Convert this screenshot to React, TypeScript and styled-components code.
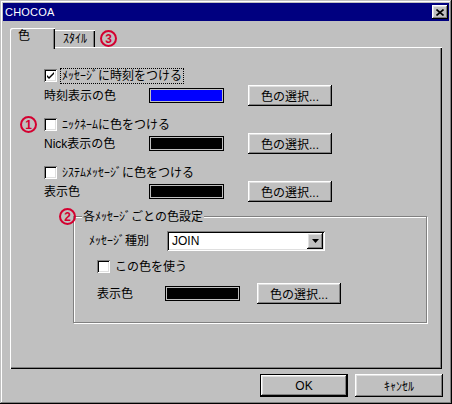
import styled, { createGlobalStyle } from "styled-components";

const GlobalStyle = createGlobalStyle`
  body {
    margin: 0;
    background: #c0c0c0;
    font-family: "Liberation Sans", "Noto Sans CJK JP", sans-serif;
    font-size: 12px;
    color: #000;
  }
`;

const RED = "#d40030";

export default function App() {
  return (
    <>
      <GlobalStyle />
      <Window>
        <TitleBar>
          <Title>CHOCOA</Title>
          <CloseBtn>
            <svg width="8" height="7" viewBox="0 0 8 7">
              <path d="M0.5 0.5 L7.5 6.5 M7.5 0.5 L0.5 6.5" stroke="#000" strokeWidth="1.6" />
            </svg>
          </CloseBtn>
        </TitleBar>
        <Body>
          <TabRow>
            <Tab $active>色</Tab>
            <Tab>ｽﾀｲﾙ</Tab>
            <Badge $ml={5}>3</Badge>
          </TabRow>
          <Panel>
            <Row $h={17} $indent={34}>
              <CheckBox $checked />
              <CheckLabel $focus>ﾒｯｾｰｼﾞに時刻をつける</CheckLabel>
            </Row>
            <Row $h={21} $indent={34} $mt={1}>
              <Label $w={105}>時刻表示の色</Label>
              <Swatch $color="#0000ff" />
              <Button $ml={24}>色の選択...</Button>
            </Row>

            <Row $h={17} $indent={10} $mt={10}>
              <Badge $mr={7}>1</Badge>
              <CheckBox />
              <CheckLabel>ﾆｯｸﾈｰﾑに色をつける</CheckLabel>
            </Row>
            <Row $h={21} $indent={34}>
              <Label $w={105}>Nick表示の色</Label>
              <Swatch $color="#000" />
              <Button $ml={24}>色の選択...</Button>
            </Row>

            <Row $h={17} $indent={34} $mt={10}>
              <CheckBox />
              <CheckLabel>ｼｽﾃﾑﾒｯｾｰｼﾞに色をつける</CheckLabel>
            </Row>
            <Row $h={21} $indent={34}>
              <Label $w={105}>表示色</Label>
              <Swatch $color="#000" />
              <Button $ml={24}>色の選択...</Button>
            </Row>

            <Group>
              <Legend>
                <Badge>2</Badge>
                <LegendText>各ﾒｯｾｰｼﾞごとの色設定</LegendText>
              </Legend>
              <Row $h={20} $indent={15} $mt={6}>
                <Label $w={78}>ﾒｯｾｰｼﾞ種別</Label>
                <Combo>
                  <ComboText>JOIN</ComboText>
                  <DropBtn>
                    <svg width="7" height="4" viewBox="0 0 7 4">
                      <path d="M0 0 H7 L3.5 4 Z" fill="#000" />
                    </svg>
                  </DropBtn>
                </Combo>
              </Row>
              <Row $h={17} $indent={23} $mt={7}>
                <CheckBox />
                <CheckLabel>この色を使う</CheckLabel>
              </Row>
              <Row $h={21} $indent={23} $mt={8}>
                <Label $w={68}>表示色</Label>
                <Swatch $color="#000" />
                <Button $ml={17}>色の選択...</Button>
              </Row>
            </Group>
          </Panel>
          <Footer>
            <Button $w={88} $h={23} $default>OK</Button>
            <Button $w={88} $h={23}>ｷｬﾝｾﾙ</Button>
          </Footer>
        </Body>
      </Window>
    </>
  );
}

function CheckBox({ $checked }: { $checked?: boolean }) {
  return (
    <Box>
      {$checked && (
        <svg width="7" height="7" viewBox="0 0 7 7">
          <path d="M0 2 L2 4 L7 -1 L7 1 L2 6 L0 4 Z" fill="#000" transform="translate(0 1)" />
        </svg>
      )}
    </Box>
  );
}

const raised = `
  box-shadow: inset -1px -1px #000, inset 1px 1px #fff, inset -2px -2px #808080,
    inset 2px 2px #dfdfdf;
`;

const sunken = `
  box-shadow: inset 1px 1px #808080, inset -1px -1px #fff, inset 2px 2px #000,
    inset -2px -2px #dfdfdf;
`;

const Window = styled.div`
  width: 452px;
  height: 404px;
  box-sizing: border-box;
  padding: 3px;
  background: #c0c0c0;
  box-shadow: inset -1px -1px #000, inset 1px 1px #c0c0c0, inset -2px -2px #808080,
    inset 2px 2px #fff;
  display: flex;
  flex-direction: column;
`;

const TitleBar = styled.div`
  height: 18px;
  background: #000080;
  display: flex;
  align-items: center;
  justify-content: space-between;
  padding: 0 1px 0 2px;
`;

const Title = styled.span`
  color: #fff;
  font-size: 11px;
  line-height: 18px;
  letter-spacing: 0.2px;
`;

const CloseBtn = styled.div`
  width: 16px;
  height: 14px;
  background: #c0c0c0;
  display: grid;
  place-items: center;
  ${raised}
`;

const Body = styled.div`
  display: flex;
  flex-direction: column;
  padding: 7px 0 0 7px;
`;

const TabRow = styled.div`
  display: flex;
  align-items: flex-end;
  height: 19px;
`;

const Tab = styled.div<{ $active?: boolean }>`
  box-sizing: border-box;
  background: #c0c0c0;
  line-height: 16px;
  display: flex;
  ${({ $active }) =>
    $active
      ? `
    width: 45px;
    height: 21px;
    margin-bottom: -2px;
    padding-left: 8px;
    position: relative;
    z-index: 1;
    border-top-left-radius: 2px;
    box-shadow: inset 1px 1px #fff, inset -1px 0 #000, inset -2px 0 #808080;
  `
      : `
    width: 40px;
    height: 17px;
    padding-top: 1px;
    justify-content: center;
    box-shadow: inset 0 1px #fff, inset -1px 0 #000, inset -2px 0 #808080;
  `}
`;

const Badge = styled.span<{ $ml?: number; $mr?: number }>`
  width: 17px;
  height: 17px;
  flex: none;
  box-sizing: border-box;
  border: 2px solid ${RED};
  border-radius: 50%;
  color: ${RED};
  font-size: 12px;
  font-weight: bold;
  line-height: 1;
  display: grid;
  place-items: center;
  margin-left: ${({ $ml }) => $ml ?? 0}px;
  margin-right: ${({ $mr }) => $mr ?? 0}px;
`;

const Panel = styled.div`
  width: 432px;
  height: 322px;
  box-sizing: border-box;
  padding-top: 20px;
  box-shadow: inset 1px 1px #fff, inset -1px -1px #000, inset -2px -2px #808080;
  display: flex;
  flex-direction: column;
`;

const Row = styled.div<{ $h: number; $indent: number; $mt?: number }>`
  display: flex;
  align-items: center;
  height: ${({ $h }) => $h}px;
  padding-left: ${({ $indent }) => $indent}px;
  margin-top: ${({ $mt }) => $mt ?? 0}px;
`;

const Box = styled.span`
  width: 13px;
  height: 13px;
  flex: none;
  box-sizing: border-box;
  background: #fff;
  margin-right: 4px;
  display: grid;
  place-items: center;
  ${sunken}
`;

const CheckLabel = styled.span<{ $focus?: boolean }>`
  padding: 0 1px;
  line-height: 14px;
  outline: ${({ $focus }) => ($focus ? "1px dotted #000" : "none")};
`;

const Label = styled.span<{ $w: number }>`
  width: ${({ $w }) => $w}px;
  flex: none;
  line-height: 16px;
`;

const Swatch = styled.span<{ $color: string }>`
  width: 75px;
  height: 15px;
  flex: none;
  box-sizing: border-box;
  border: 1px solid #000;
  background: ${({ $color }) => $color};
  box-shadow: inset 0 0 0 1px #c0c0c0;
`;

const Button = styled.button<{ $w?: number; $h?: number; $ml?: number; $default?: boolean }>`
  width: ${({ $w }) => $w ?? 84}px;
  height: ${({ $h }) => $h ?? 21}px;
  margin-left: ${({ $ml }) => $ml ?? 0}px;
  box-sizing: border-box;
  padding: 0;
  background: #c0c0c0;
  color: #000;
  font: inherit;
  font-size: 12px;
  border: ${({ $default }) => ($default ? "1px solid #000" : "none")};
  ${raised}
`;

const Group = styled.div`
  width: 354px;
  height: 107px;
  box-sizing: border-box;
  margin: 14px 0 0 63px;
  border: 1px solid #808080;
  box-shadow: inset 1px 1px #fff, 1px 1px #fff;
  display: flex;
  flex-direction: column;
`;

const Legend = styled.div`
  display: flex;
  align-items: center;
  gap: 6px;
  height: 17px;
  margin: -9px 0 0 -15px;
`;

const LegendText = styled.span`
  background: #c0c0c0;
  padding: 0 1px;
  line-height: 16px;
`;

const Combo = styled.div`
  width: 158px;
  height: 20px;
  box-sizing: border-box;
  padding: 2px;
  background: #fff;
  display: flex;
  align-items: center;
  ${sunken}
`;

const ComboText = styled.span`
  flex: 1;
  padding-left: 3px;
  font-size: 12px;
`;

const DropBtn = styled.span`
  width: 16px;
  height: 16px;
  box-sizing: border-box;
  background: #c0c0c0;
  display: grid;
  place-items: center;
  ${raised}
`;

const Footer = styled.div`
  display: flex;
  justify-content: flex-end;
  gap: 7px;
  margin-top: 5px;
  padding-right: 6px;
`;
